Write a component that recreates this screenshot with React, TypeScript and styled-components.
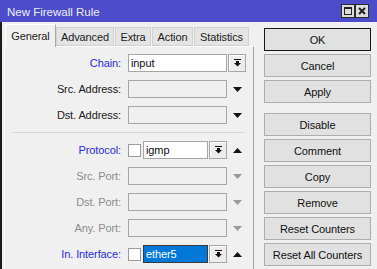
import React from "react"
import styled, { createGlobalStyle } from "styled-components"

const Global = createGlobalStyle`
  html, body {
    margin: 0;
    padding: 0;
    background: #f0f0f0;
  }
  body {
    font-family: "Liberation Sans", Arial, sans-serif;
    font-size: 11px;
    letter-spacing: -0.1px;
    color: #1b1b1b;
  }
`

const Window = styled.div`
  width: 377px;
  height: 269px;
  overflow: hidden;
  display: flex;
  flex-direction: column;
  background: #f0f0f0;
`

const TitleBar = styled.div`
  height: 22px;
  flex: none;
  background: #4c4cca;
  display: flex;
  align-items: center;
  padding: 0 8px 0 7px;
  color: #ececf8;
  font-size: 11.5px;
  letter-spacing: 0;
`

const Title = styled.div`
  flex: 1;
  padding-top: 1px;
`

const TitleButton = styled.div`
  width: 12px;
  height: 12px;
  border: 1px solid #2a2a2a;
  background: #dcdcdc;
  display: flex;
  align-items: center;
  justify-content: center;
`

const Body = styled.div`
  flex: 1;
  display: flex;
  border-left: 2px solid #1c1c1c;
  min-height: 0;
`

const LeftColumn = styled.div`
  width: 252px;
  display: flex;
  flex-direction: column;
`

const TabStrip = styled.div`
  height: 25px;
  display: flex;
  align-items: flex-end;
  padding-left: 3px;
  position: relative;
  z-index: 1;
  margin-bottom: -1px;
`

const Tab = styled.div<{ $w: number; $active?: boolean }>`
  width: ${(p) => p.$w}px;
  box-sizing: border-box;
  height: ${(p) => (p.$active ? 23 : 19)}px;
  margin-right: ${(p) => (p.$active ? 0 : 1)}px;
  margin-bottom: ${(p) => (p.$active ? 0 : 1)}px;
  display: flex;
  align-items: center;
  justify-content: center;
  background: ${(p) => (p.$active ? "#f0f0f0" : "#e4e4e4")};
  border: 1px solid ${(p) => (p.$active ? "#ffffff" : "#d2d2d2")};
  border-right-color: ${(p) => (p.$active ? "#a8a8a8" : "#d2d2d2")};
  border-bottom: ${(p) => (p.$active ? "none" : "1px solid #d2d2d2")};
  padding-top: ${(p) => (p.$active ? 0 : 1)}px;
`

const Panel = styled.div`
  flex: 1;
  margin-left: 2px;
  border-left: 1px solid #ffffff;
  border-top: 1px solid #ffffff;
  border-right: 1px solid #a3a3a3;
  padding-top: 7px;
  display: flex;
  flex-direction: column;
  gap: 8px;
`

const Row = styled.div`
  display: flex;
  align-items: center;
  height: 18px;
`

const Label = styled.div<{ $tone: "blue" | "dark" | "grey" }>`
  width: 116px;
  margin-right: 7px;
  text-align: right;
  white-space: nowrap;
  color: ${(p) =>
    p.$tone === "blue" ? "#2b2be0" : p.$tone === "grey" ? "#8d8d8d" : "#202020"};
`

const Input = styled.div<{ $w: number; $variant: "white" | "grey" | "selected" }>`
  width: ${(p) => p.$w}px;
  height: 18px;
  box-sizing: border-box;
  padding: 0 2px;
  display: flex;
  align-items: center;
  border: 1px solid ${(p) => (p.$variant === "selected" ? "#3a3a3a" : "#a6a6a6")};
  background: ${(p) =>
    p.$variant === "white" ? "#ffffff" : p.$variant === "selected" ? "#0078d7" : "#f0f0f0"};
  color: ${(p) => (p.$variant === "selected" ? "#ffffff" : "#111")};
  margin-right: 1px;
`

const ComboButton = styled.div`
  width: 18px;
  height: 18px;
  box-sizing: border-box;
  border: 1px solid #a6a6a6;
  background: #ececec;
  box-shadow: inset 1px 1px 0 #ffffff;
  display: flex;
  align-items: center;
  justify-content: center;
  margin-right: 1px;
`

const Check = styled.div`
  width: 13px;
  height: 13px;
  box-sizing: border-box;
  border: 1px solid #9a9a9a;
  background: #ffffff;
  margin-right: 2px;
`

const ArrowCell = styled.div`
  width: 18px;
  height: 18px;
  display: flex;
  align-items: center;
  justify-content: center;
`

const Separator = styled.div`
  height: 1px;
  width: 233px;
  margin-left: 7px;
  background: #d8d8d8;
`

const RightColumn = styled.div`
  padding: 6px 0 0 10px;
  display: flex;
  flex-direction: column;
  gap: 3px;
`

const Button = styled.div<{ $default?: boolean; $spaced?: boolean }>`
  width: 107px;
  height: 23px;
  box-sizing: border-box;
  display: flex;
  align-items: center;
  justify-content: center;
  background: #e1e1e1;
  border: 1px solid ${(p) => (p.$default ? "#151515" : "#adadad")};
  margin-top: ${(p) => (p.$spaced ? 7 : 0)}px;
  color: #111;
`

const ComboIcon = () => (
  <svg width="7" height="8" viewBox="0 0 7 8">
    <rect x="0" y="0" width="7" height="1" fill="#111" />
    <rect x="2" y="2" width="3" height="2" fill="#111" />
    <path d="M0 4 H7 L3.5 7.5 Z" fill="#111" />
  </svg>
)

const Triangle = ({ up, color }: { up?: boolean; color: string }) => (
  <svg width="9" height="5" viewBox="0 0 9 5">
    <path d={up ? "M0 5 H9 L4.5 0 Z" : "M0 0 H9 L4.5 5 Z"} fill={color} />
  </svg>
)

const tabs: { name: string; w: number }[] = [
  { name: "General", w: 51 },
  { name: "Advanced", w: 58 },
  { name: "Extra", w: 36 },
  { name: "Action", w: 41 },
  { name: "Statistics", w: 55 },
]

const buttons = [
  "OK",
  "Cancel",
  "Apply",
  "Disable",
  "Comment",
  "Copy",
  "Remove",
  "Reset Counters",
  "Reset All Counters",
]

const App = () => {
  return (
    <Window>
      <Global />
      <TitleBar>
        <Title>New Firewall Rule</Title>
        <TitleButton>
          <svg width="8" height="8" viewBox="0 0 8 8">
            <rect x="0.5" y="0.5" width="7" height="7" fill="none" stroke="#222" />
            <rect x="0" y="0" width="8" height="2" fill="#222" />
          </svg>
        </TitleButton>
        <TitleButton>
          <svg width="8" height="8" viewBox="0 0 8 8">
            <path d="M1 1 L7 7 M7 1 L1 7" stroke="#222" strokeWidth="2" />
          </svg>
        </TitleButton>
      </TitleBar>
      <Body>
        <LeftColumn>
          <TabStrip>
            {tabs.map((t, i) => (
              <Tab key={t.name} $w={t.w} $active={i === 0}>
                {t.name}
              </Tab>
            ))}
          </TabStrip>
          <Panel>
            <Row>
              <Label $tone="blue">Chain:</Label>
              <Input $w={99} $variant="white">input</Input>
              <ComboButton>
                <ComboIcon />
              </ComboButton>
            </Row>
            <Row>
              <Label $tone="dark">Src. Address:</Label>
              <Input $w={99} $variant="grey" />
              <ArrowCell>
                <Triangle color="#111" />
              </ArrowCell>
            </Row>
            <Row>
              <Label $tone="dark">Dst. Address:</Label>
              <Input $w={99} $variant="grey" />
              <ArrowCell>
                <Triangle color="#111" />
              </ArrowCell>
            </Row>
            <Separator />
            <Row>
              <Label $tone="blue">Protocol:</Label>
              <Check />
              <Input $w={65} $variant="white">igmp</Input>
              <ComboButton>
                <ComboIcon />
              </ComboButton>
              <ArrowCell>
                <Triangle up color="#111" />
              </ArrowCell>
            </Row>
            {["Src. Port:", "Dst. Port:", "Any. Port:"].map((l) => (
              <Row key={l}>
                <Label $tone="grey">{l}</Label>
                <Input $w={99} $variant="grey" />
                <ArrowCell>
                  <Triangle color="#9a9a9a" />
                </ArrowCell>
              </Row>
            ))}
            <Row>
              <Label $tone="blue">In. Interface:</Label>
              <Check />
              <Input $w={65} $variant="selected">ether5</Input>
              <ComboButton>
                <ComboIcon />
              </ComboButton>
              <ArrowCell>
                <Triangle up color="#111" />
              </ArrowCell>
            </Row>
          </Panel>
        </LeftColumn>
        <RightColumn>
          {buttons.map((b, i) => (
            <Button key={b} $default={i === 0} $spaced={b === "Disable"}>
              {b}
            </Button>
          ))}
        </RightColumn>
      </Body>
    </Window>
  )
}

export default App
